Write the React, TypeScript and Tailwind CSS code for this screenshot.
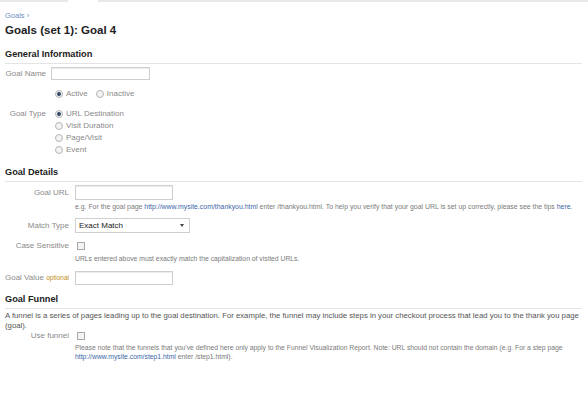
import React from "react";

function Radio({ checked }: { checked?: boolean }) {
  return (
    <span className="inline-flex items-center justify-center w-[8px] h-[8px] rounded-full border border-[#b5b5b5] bg-[#f3f3f3] shrink-0">
      {checked && <span className="w-[4px] h-[4px] rounded-full bg-[#2f4a66]" />}
    </span>
  );
}

function Checkbox() {
  return <span className="inline-block w-[8px] h-[8px] border border-[#a8a8a8] bg-[#f4f4f4] shrink-0" />;
}

function TextInput({ w }: { w: string }) {
  return <div className={`${w} h-full border border-[#cfcfcf] bg-white shadow-[inset_0_1px_1px_rgba(0,0,0,0.08)]`} />;
}

function SectionHeader({ title }: { title: string }) {
  return (
    <div className="mr-[6px] border-b border-[#e4e4e4] h-[17px] flex items-center">
      <span className="text-[9.2px] font-bold text-[#222]">{title}</span>
    </div>
  );
}

export default function App() {
  return (
    <div className="w-[588px] h-[396px] bg-white font-['Liberation_Sans',Arial,sans-serif] overflow-hidden">
      {/* top strip */}
      <div className="flex h-[2px]">
        <div className="w-[68px] bg-[#e8e8e8]" />
        <div className="w-[30px]" />
        <div className="flex-1 bg-[#e8e8e8]" />
      </div>

      <div className="pl-[5px]">
        <div className="h-[20px] pt-[9px] text-[7.5px] leading-[9px] text-[#6d8fbf]">Goals ›</div>
        <div className="h-[17px] flex items-center text-[11.5px] font-bold text-[#222]">Goals (set 1): Goal 4</div>

        {/* General Information */}
        <div className="mt-[8px]">
          <SectionHeader title="General Information" />
        </div>

        <div className="mt-[3px] grid grid-cols-[46px_1fr] text-[8px] text-[#8a8a8a]">
          <div className="h-[13px] flex items-center justify-end pr-[5px]">Goal Name</div>
          <div className="h-[13px]">
            <TextInput w="w-[99px]" />
          </div>

          <div className="h-[13px] mt-[7px]" />
          <div className="h-[13px] mt-[7px] flex items-center gap-[3px] pl-[4px]">
            <Radio checked />
            <span className="mr-[5px]">Active</span>
            <Radio />
            <span>Inactive</span>
          </div>

          <div className="mt-[8px] h-[12px] flex items-center justify-end pr-[5px]">Goal Type</div>
          <div className="mt-[8px] flex flex-col pl-[4px]">
            {["URL Destination", "Visit Duration", "Page/Visit", "Event"].map((t, i) => (
              <div key={t} className="h-[12px] flex items-center gap-[3px]">
                <Radio checked={i === 0} />
                <span>{t}</span>
              </div>
            ))}
          </div>
        </div>

        {/* Goal Details */}
        <div className="mt-[9px]">
          <SectionHeader title="Goal Details" />
        </div>

        <div className="mt-[3px] grid grid-cols-[70px_1fr] text-[8px] text-[#8a8a8a]">
          <div className="h-[15px] flex items-center justify-end pr-[6px]">Goal URL</div>
          <div className="h-[15px]">
            <TextInput w="w-[98px]" />
          </div>
          <div />
          <div className="h-[14px] flex items-center text-[6.9px] text-[#7a7a7a] whitespace-nowrap">
            e.g. For the goal page&nbsp;<span className="text-[#3d67a8]">http://www.mysite.com/thankyou.html</span>&nbsp;enter /thankyou.html. To help you verify that your goal URL is set up correctly, please see the tips&nbsp;<span className="text-[#3d67a8]">here</span>.
          </div>

          <div className="mt-[4px] h-[15px] flex items-center justify-end pr-[6px]">Match Type</div>
          <div className="mt-[4px] h-[15px]">
            <div className="w-[115px] h-full border border-[#cfcfcf] bg-white flex items-center justify-between pl-[3px] pr-[5px] text-[8px] text-[#222]">
              <span>Exact Match</span>
              <span className="w-0 h-0 border-l-[2px] border-r-[2px] border-t-[3px] border-l-transparent border-r-transparent border-t-[#444]" />
            </div>
          </div>

          <div className="mt-[7px] h-[12px] flex items-center justify-end pr-[6px]">Case Sensitive</div>
          <div className="mt-[7px] h-[12px] flex items-center pl-[2px]">
            <Checkbox />
          </div>
          <div />
          <div className="h-[14px] flex items-center text-[6.8px] text-[#7a7a7a] whitespace-nowrap">
            URLs entered above must exactly match the capitalization of visited URLs.
          </div>

          <div className="mt-[5px] h-[14px] flex items-center justify-end pr-[6px] whitespace-nowrap">
            Goal Value&nbsp;<span className="text-[6.5px] text-[#c08a1a]">optional</span>
          </div>
          <div className="mt-[5px] h-[14px]">
            <TextInput w="w-[98px]" />
          </div>
        </div>

        {/* Goal Funnel */}
        <div className="mt-[7px]">
          <SectionHeader title="Goal Funnel" />
        </div>
        <p className="mt-[2px] pr-[8px] text-[7.75px] leading-[10px] text-[#555]">
          A funnel is a series of pages leading up to the goal destination. For example, the funnel may include steps in your checkout process that lead you to the thank you page (goal).
        </p>

        <div className="mt-[-1px] grid grid-cols-[70px_1fr] text-[8px] text-[#8a8a8a]">
          <div className="h-[12px] flex items-center justify-end pr-[6px]">Use funnel</div>
          <div className="h-[12px] flex items-center pl-[2px]">
            <Checkbox />
          </div>
          <div />
          <div className="mt-[2px] pr-[12px] text-[6.8px] leading-[8.5px] text-[#7a7a7a]">
            Please note that the funnels that you've defined here only apply to the Funnel Visualization Report. Note: URL should not contain the domain (e.g. For a step page <span className="text-[#3d67a8]">http://www.mysite.com/step1.html</span> enter /step1.html).
          </div>
        </div>
      </div>
    </div>
  );
}
